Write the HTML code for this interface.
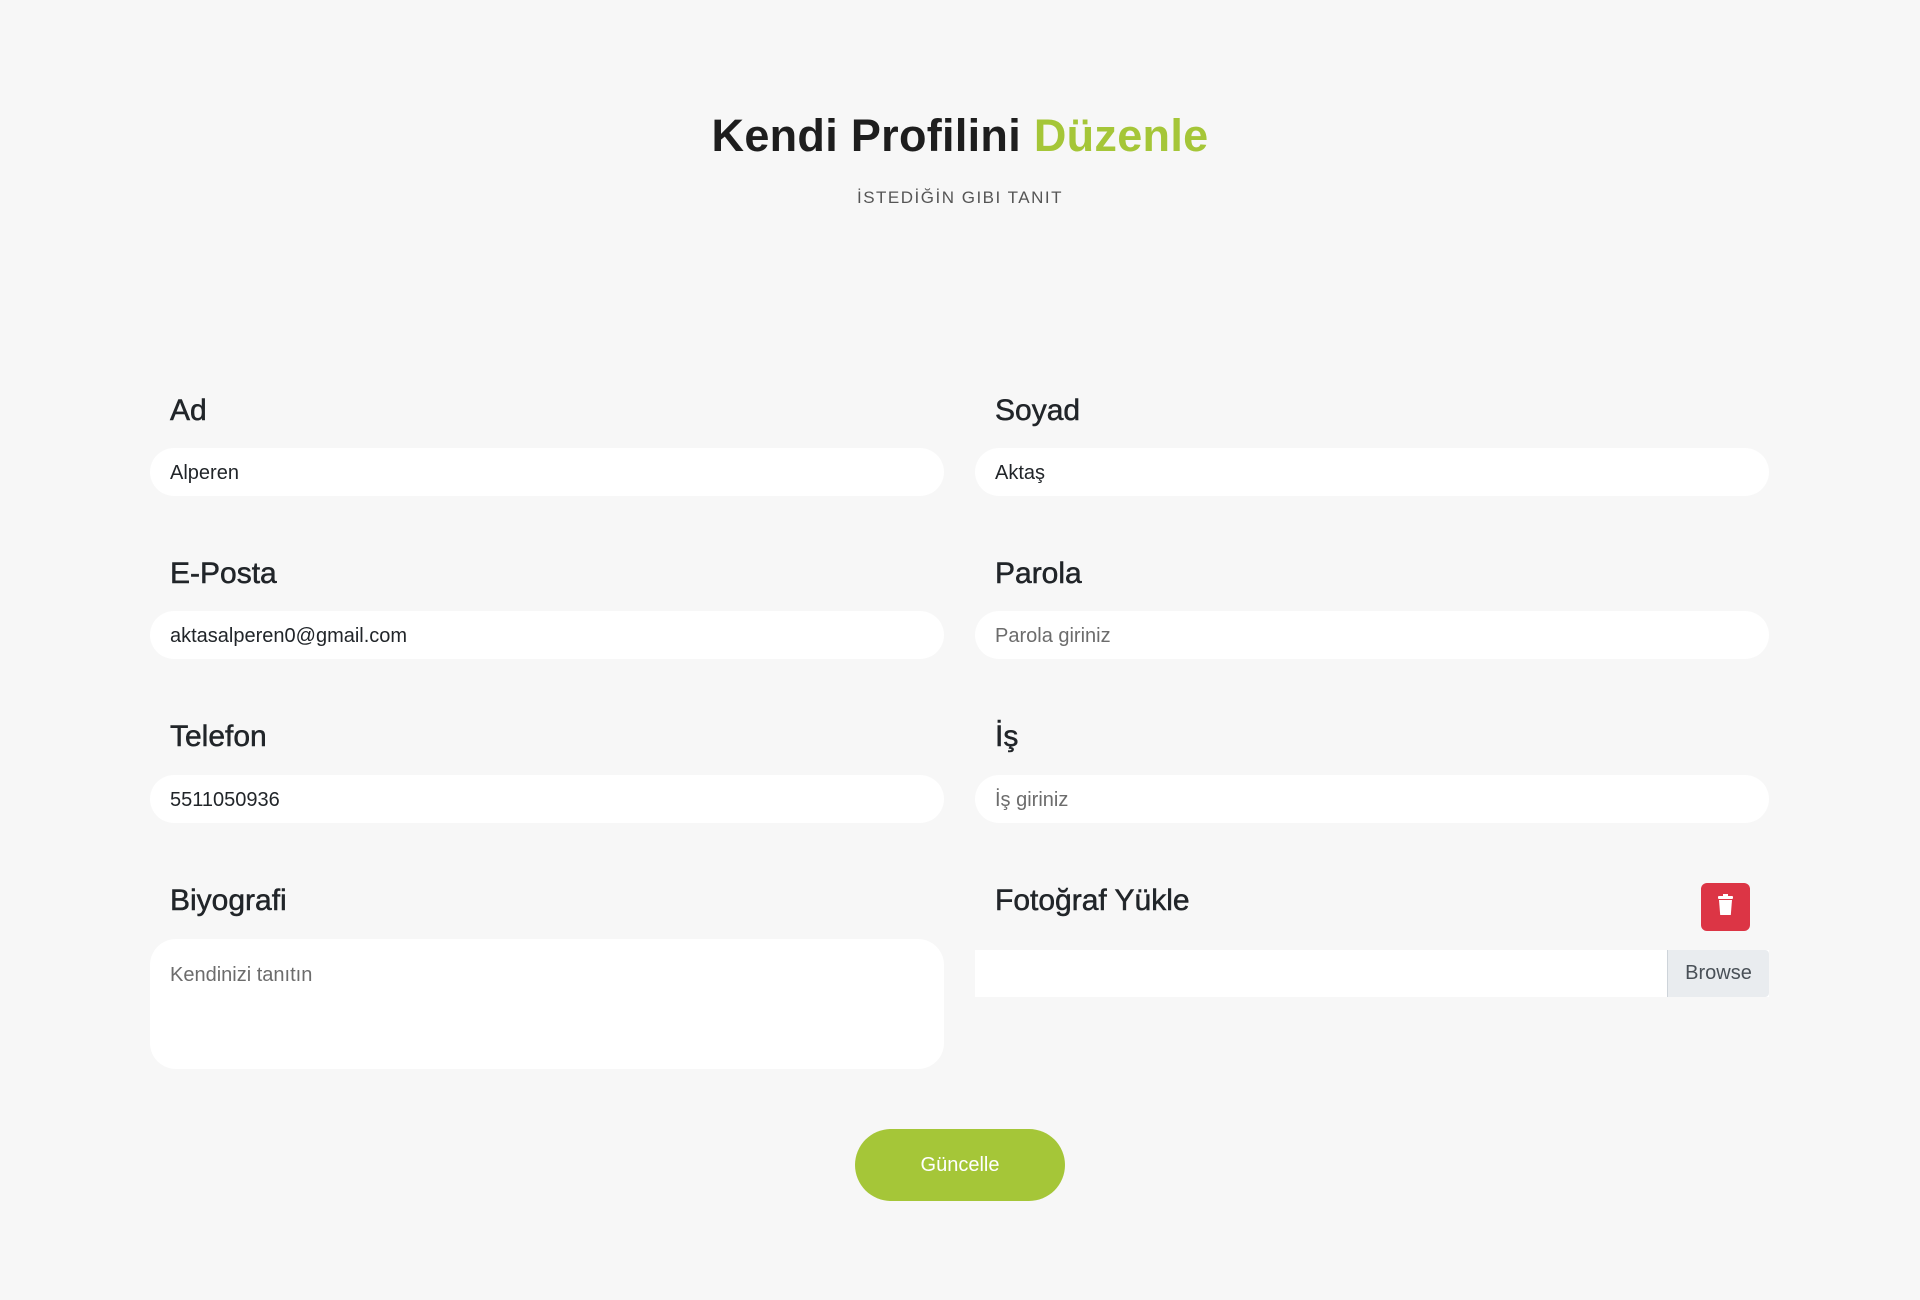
<!DOCTYPE html>
<html><head><meta charset="utf-8"><style>
*{box-sizing:border-box;margin:0;padding:0}
body{width:1920px;height:1300px;background:#f7f7f7;font-family:"Liberation Sans",sans-serif;position:relative;color:#212121;overflow:hidden}
.abs{position:absolute}
h1{position:absolute;left:0;width:1920px;top:110px;text-align:center;font-size:45px;font-weight:bold;color:#1e1e1e;letter-spacing:0.3px}
h1 span{color:#a5c638}
.sub{position:absolute;left:0;width:1920px;top:188px;text-align:center;font-size:17px;color:#555;letter-spacing:1.5px}
.lbl{position:absolute;font-size:30px;color:#212529;-webkit-text-stroke:0.5px #212529}
.inp{position:absolute;height:48px;width:794px;background:#fff;border-radius:24px;font-size:20px;line-height:50px;padding-left:20px;color:#212529}
.ph{color:#6c6c6c}
</style></head><body>
<h1>Kendi Profilini <span>Düzenle</span></h1>
<div class="sub">İSTEDİĞİN GIBI TANIT</div>

<div class="lbl" style="left:170px;top:394px">Ad</div>
<div class="lbl" style="left:995px;top:394px">Soyad</div>
<div class="inp" style="left:150px;top:448px">Alperen</div>
<div class="inp" style="left:975px;top:448px">Aktaş</div>

<div class="lbl" style="left:170px;top:557px">E-Posta</div>
<div class="lbl" style="left:995px;top:557px">Parola</div>
<div class="inp" style="left:150px;top:611px">aktasalperen0@gmail.com</div>
<div class="inp ph" style="left:975px;top:611px">Parola giriniz</div>

<div class="lbl" style="left:170px;top:720px">Telefon</div>
<div class="lbl" style="left:995px;top:720px">İş</div>
<div class="inp" style="left:150px;top:775px">5511050936</div>
<div class="inp ph" style="left:975px;top:775px">İş giriniz</div>

<div class="lbl" style="left:170px;top:884px">Biyografi</div>
<div class="lbl" style="left:995px;top:884px">Fotoğraf Yükle</div>
<div class="abs ph" style="left:150px;top:939px;width:794px;height:130px;background:#fff;border-radius:26px;font-size:20px;padding:25px 20px">Kendinizi tanıtın</div>

<div class="abs" style="left:1701px;top:883px;width:49px;height:48px;background:#dc3545;border-radius:6px">
<svg width="49" height="48" viewBox="0 0 49 48"><rect x="17" y="13" width="15" height="3" rx="1" fill="#fff"/><rect x="22" y="11" width="5" height="3" fill="#fff"/><path d="M18 17h13l-1.2 15h-10.6z" fill="#fff"/></svg>
</div>

<div class="abs" style="left:975px;top:950px;width:794px;height:47px;background:#fff"></div>
<div class="abs" style="left:1667px;top:950px;width:102px;height:47px;background:#e9ecef;border-left:1px solid #ced4da;border-radius:0 4px 4px 0;font-size:20px;line-height:47px;text-align:center;color:#495057">Browse</div>

<div class="abs" style="left:855px;top:1129px;width:210px;height:72px;background:#a5c638;border-radius:36px;color:#fff;font-size:20px;line-height:72px;text-align:center">Güncelle</div>
</body></html>
